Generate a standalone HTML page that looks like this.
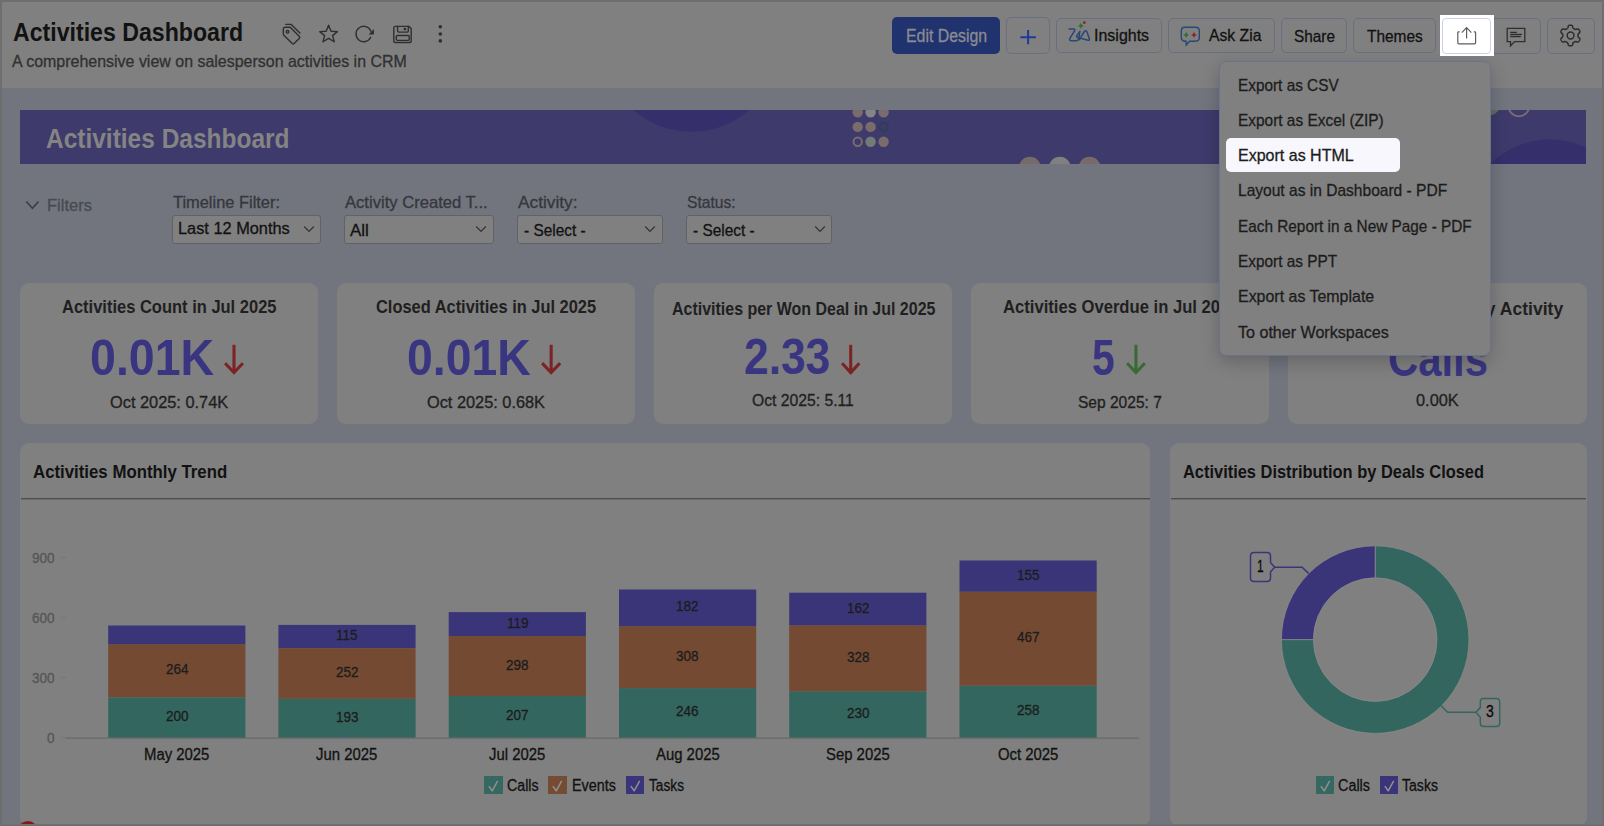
<!DOCTYPE html><html><head><meta charset="utf-8"><style>
html,body{margin:0;padding:0;width:1604px;height:826px;overflow:hidden;background:#808080;}
body{position:relative;font-family:"Liberation Sans",sans-serif;}
.t{position:absolute;white-space:nowrap;line-height:1;transform-origin:0 0;-webkit-text-stroke:0.3px currentColor;}
.r{position:absolute;}
</style></head><body>
<div class="r" style="left:0px;top:0px;width:1604px;height:88px;background:#808080;"></div>
<div class="r" style="left:0px;top:88px;width:1604px;height:738px;background:#72757e;"></div>
<div class="t" style="left:13.00px;top:19px;font-size:26.5px;color:#121212;font-weight:bold;-webkit-text-stroke:0;transform:scaleX(0.8729);">Activities Dashboard</div>
<div class="t" style="left:12.20px;top:53px;font-size:17.0px;color:#303030;transform:scaleX(0.9390);">A comprehensive view on salesperson activities in CRM</div>
<svg class="r" style="left:270px;top:15px;width:190px;height:40px" viewBox="270 15 190 40" fill="none" stroke="#2e2e2e" stroke-width="1.4" stroke-linejoin="round" stroke-linecap="round">
<path d="M283.3 29.3 Q283.3 27.3 285.3 27.3 L290.2 27.3 L299.4 36.5 Q300.3 37.4 299.4 38.3 L294.1 43.6 Q293.2 44.5 292.3 43.6 L284.1 35.4 Q283.3 34.6 283.3 33.5 Z"/>
<circle cx="287.5" cy="31.8" r="1.3"/>
<path d="M285.8 24.4 H291.3 L299.9 33"/>
<path d="M328.60 25.23 L331.04 31.24 L337.44 31.62 L332.55 35.66 L334.24 41.77 L328.60 38.29 L322.96 41.77 L324.65 35.66 L319.76 31.62 L326.16 31.24 Z"/>
<path d="M370.7 37.3 A7.7 7.7 0 1 1 370.9 31.2"/>
<path d="M373.9 29.1 L373.9 34.6 L368.6 34.6 Z" fill="#2e2e2e" stroke="none"/>
<path d="M395.3 26.4 H409 L411.2 28.6 V41.2 Q411.2 42.5 409.9 42.5 H395.1 Q393.8 42.5 393.8 41.2 V27.7 Q393.8 26.4 395.3 26.4 Z"/>
<path d="M397.6 26.4 V31 Q397.6 32.1 398.7 32.1 H407.2 Q408.3 32.1 408.3 31 V26.4"/>
<rect x="396.3" y="35.5" width="13" height="4.9" rx="1.1"/>
<circle cx="404.9" cy="29.1" r="0.7" fill="#2e2e2e"/>
</svg>
<svg class="r" style="left:435px;top:22px;width:12px;height:24px" viewBox="435 22 12 24"><circle cx="440.3" cy="26.8" r="1.8" fill="#2e2e2e"/><circle cx="440.3" cy="34" r="1.8" fill="#2e2e2e"/><circle cx="440.3" cy="40.9" r="1.8" fill="#2e2e2e"/></svg>
<div class="r" style="left:892px;top:17px;width:108px;height:37px;background:#20336f;border-radius:5px;"></div>
<div class="t" style="left:906.00px;top:28px;font-size:17.5px;color:#8a8c92;transform:scaleX(0.9074);">Edit Design</div>
<div class="r" style="left:1006px;top:17px;width:44px;height:37px;border:1px solid #6a6f80;box-sizing:border-box;border-radius:5px;"></div>
<svg class="r" style="left:1018px;top:28px;width:20px;height:18px" viewBox="1018 28 20 18"><path d="M1020.3 37.2 H1035.9 M1028.1 30 V44.2" stroke="#1d3a98" stroke-width="2"/></svg>
<div class="r" style="left:1056px;top:18px;width:106px;height:35px;border:1px solid #6a6f80;box-sizing:border-box;border-radius:5px;"></div>
<svg class="r" style="left:1066px;top:18px;width:26px;height:26px" viewBox="1066 18 26 26" fill="none">
<path d="M1069.2 28.9 H1073.6 Q1075.4 29.1 1074.5 30.9 L1069.9 38.3 Q1068.9 40.8 1071.6 40.8 H1076.4 Q1078.1 40.7 1078.6 38.9 L1079.8 31.6" stroke="#284676" stroke-width="1.5" stroke-linejoin="round" stroke-linecap="round"/>
<path d="M1079.8 31.8 L1076.8 35.6 Q1076.2 37.1 1077.9 37.5 L1088 40.2 Q1089.8 40.5 1089.3 38.6 L1087 32 Q1086 29.6 1084.4 31.5 L1079.2 39.8" stroke="#284676" stroke-width="1.5" stroke-linejoin="round" stroke-linecap="round"/>
<path d="M1080.9 22.6 Q1081.3 25.6 1084.3 26 Q1081.3 26.4 1080.9 29.4 Q1080.5 26.4 1077.5 26 Q1080.5 25.6 1080.9 22.6 Z" fill="#2f6e34"/>
<circle cx="1084.3" cy="22.7" r="1.4" fill="#8c2424"/>
</svg>
<div class="t" style="left:1093.70px;top:28px;font-size:16.75px;color:#121212;transform:scaleX(0.9545);">Insights</div>
<div class="r" style="left:1168px;top:18px;width:107px;height:35px;border:1px solid #6a6f80;box-sizing:border-box;border-radius:5px;"></div>
<svg class="r" style="left:1178px;top:24px;width:24px;height:24px" viewBox="1178 24 24 24" fill="none">
<path d="M1185 27.3 H1195.5 Q1199.3 27.3 1199.3 31 V37.6 Q1199.3 41.2 1195.5 41.2 H1189.5 L1186.3 45 L1186 41.2 Q1181.3 41 1181.3 37.4 V31 Q1181.3 27.3 1185 27.3 Z" stroke="#284676" stroke-width="1.4"/>
<path d="M1186.2 31.8 Q1186.6 34.5 1189.2 34.9 Q1186.6 35.3 1186.2 38 Q1185.8 35.3 1183.2 34.9 Q1185.8 34.5 1186.2 31.8 Z" fill="#2f6e34"/>
<path d="M1194 31.8 Q1194.4 34.5 1197 34.9 Q1194.4 35.3 1194 38 Q1193.6 35.3 1191 34.9 Q1193.6 34.5 1194 31.8 Z" fill="#8c2424"/>
</svg>
<div class="t" style="left:1208.90px;top:28px;font-size:16.75px;color:#121212;transform:scaleX(0.9383);">Ask Zia</div>
<div class="r" style="left:1281px;top:18px;width:66px;height:35px;border:1px solid #6a6f80;box-sizing:border-box;border-radius:5px;"></div>
<div class="t" style="left:1293.60px;top:28px;font-size:17.0px;color:#121212;transform:scaleX(0.9016);">Share</div>
<div class="r" style="left:1353px;top:18px;width:83px;height:35px;border:1px solid #6a6f80;box-sizing:border-box;border-radius:5px;"></div>
<div class="t" style="left:1367.10px;top:28px;font-size:17.0px;color:#121212;transform:scaleX(0.9087);">Themes</div>
<div class="r" style="left:1488px;top:18px;width:53px;height:36px;border:1px solid #6a6f80;box-sizing:border-box;border-radius:5px;"></div>
<svg class="r" style="left:1500px;top:22px;width:32px;height:28px" viewBox="1500 22 32 28" fill="none" stroke="#2e2e2e" stroke-width="1.3">
<path d="M1507.2 28.4 H1524.8 V41.6 H1514.6 L1510.5 45.8 V41.6 H1507.2 Z" stroke-linejoin="miter"/>
<path d="M1510.2 32.3 H1516.8 M1510.2 34.5 H1521.8 M1510.2 36.7 H1520.8"/>
</svg>
<div class="r" style="left:1547px;top:18px;width:48px;height:36px;border:1px solid #6a6f80;box-sizing:border-box;border-radius:5px;"></div>
<svg class="r" style="left:1555px;top:20px;width:32px;height:32px" viewBox="1555 20 32 32" fill="none" stroke="#2e2e2e" stroke-width="1.5" stroke-linejoin="round">
<path d="M1570.40 25.15 L1570.76 25.16 L1571.12 25.19 L1571.48 25.25 L1571.83 25.35 L1572.16 25.55 L1572.44 25.90 L1572.65 26.46 L1572.79 27.15 L1572.93 27.72 L1573.10 28.08 L1573.31 28.31 L1573.53 28.47 L1573.76 28.61 L1573.99 28.74 L1574.23 28.87 L1574.46 29.01 L1574.69 29.15 L1574.92 29.28 L1575.17 29.39 L1575.47 29.45 L1575.87 29.42 L1576.43 29.25 L1577.10 29.03 L1577.70 28.93 L1578.14 29.00 L1578.47 29.19 L1578.74 29.44 L1578.97 29.72 L1579.17 30.02 L1579.36 30.32 L1579.54 30.64 L1579.69 30.97 L1579.82 31.31 L1579.90 31.66 L1579.90 32.04 L1579.74 32.47 L1579.35 32.93 L1578.83 33.40 L1578.40 33.80 L1578.17 34.13 L1578.08 34.42 L1578.05 34.70 L1578.05 34.97 L1578.05 35.23 L1578.05 35.50 L1578.05 35.77 L1578.05 36.03 L1578.05 36.30 L1578.08 36.58 L1578.17 36.87 L1578.40 37.20 L1578.83 37.60 L1579.35 38.07 L1579.74 38.53 L1579.90 38.96 L1579.90 39.34 L1579.82 39.69 L1579.69 40.03 L1579.54 40.36 L1579.36 40.67 L1579.17 40.98 L1578.97 41.28 L1578.74 41.56 L1578.47 41.81 L1578.14 42.00 L1577.70 42.07 L1577.10 41.97 L1576.43 41.75 L1575.87 41.58 L1575.47 41.55 L1575.17 41.61 L1574.92 41.72 L1574.69 41.85 L1574.46 41.99 L1574.23 42.13 L1573.99 42.26 L1573.76 42.39 L1573.53 42.53 L1573.31 42.69 L1573.10 42.92 L1572.93 43.28 L1572.79 43.85 L1572.65 44.54 L1572.44 45.10 L1572.16 45.45 L1571.83 45.65 L1571.48 45.75 L1571.12 45.81 L1570.76 45.84 L1570.40 45.85 L1570.04 45.84 L1569.68 45.81 L1569.32 45.75 L1568.97 45.65 L1568.64 45.45 L1568.36 45.10 L1568.15 44.54 L1568.01 43.85 L1567.87 43.28 L1567.70 42.92 L1567.49 42.69 L1567.27 42.53 L1567.04 42.39 L1566.81 42.26 L1566.58 42.13 L1566.34 41.99 L1566.11 41.85 L1565.88 41.72 L1565.63 41.61 L1565.33 41.55 L1564.93 41.58 L1564.37 41.75 L1563.70 41.97 L1563.10 42.07 L1562.66 42.00 L1562.33 41.81 L1562.06 41.56 L1561.83 41.28 L1561.63 40.98 L1561.44 40.68 L1561.26 40.36 L1561.11 40.03 L1560.98 39.69 L1560.90 39.34 L1560.90 38.96 L1561.06 38.53 L1561.45 38.07 L1561.97 37.60 L1562.40 37.20 L1562.63 36.87 L1562.72 36.58 L1562.75 36.30 L1562.75 36.03 L1562.75 35.77 L1562.75 35.50 L1562.75 35.23 L1562.75 34.97 L1562.75 34.70 L1562.72 34.42 L1562.63 34.13 L1562.40 33.80 L1561.97 33.40 L1561.45 32.93 L1561.06 32.47 L1560.90 32.04 L1560.90 31.66 L1560.98 31.31 L1561.11 30.97 L1561.26 30.64 L1561.44 30.32 L1561.63 30.02 L1561.83 29.72 L1562.06 29.44 L1562.33 29.19 L1562.66 29.00 L1563.10 28.93 L1563.70 29.03 L1564.37 29.25 L1564.93 29.42 L1565.33 29.45 L1565.63 29.39 L1565.88 29.28 L1566.11 29.15 L1566.34 29.01 L1566.58 28.87 L1566.81 28.74 L1567.04 28.61 L1567.27 28.47 L1567.49 28.31 L1567.70 28.08 L1567.87 27.72 L1568.01 27.15 L1568.15 26.46 L1568.36 25.90 L1568.64 25.55 L1568.97 25.35 L1569.32 25.25 L1569.68 25.19 L1570.04 25.16 L1570.40 25.15 Z"/>
<circle cx="1570.6" cy="35.5" r="3.4"/>
</svg>
<svg class="r" style="left:20px;top:110px;width:1566px;height:54px" viewBox="20 110 1566 54">
<rect x="20" y="110" width="1566" height="54" fill="#3e3a6c"/>
<circle cx="691.4" cy="44.3" r="87.5" fill="#352f6b"/>
<circle cx="857.7" cy="112.3" r="5.2" fill="#7a6c6c"/><circle cx="870.6" cy="112.3" r="5.2" fill="#858585"/><circle cx="883.6" cy="112.3" r="5.2" fill="#7a6c6c"/>
<circle cx="857.7" cy="126.9" r="5.2" fill="#7a6c6c"/><circle cx="870.6" cy="126.9" r="5.2" fill="#7a6c6c"/><circle cx="883.6" cy="126.9" r="4.1" fill="none" stroke="#2e3e55" stroke-width="2"/>
<circle cx="857.7" cy="141.8" r="4.2" fill="none" stroke="#7a6c6c" stroke-width="2"/><circle cx="870.6" cy="141.8" r="5.2" fill="#727b78"/><circle cx="883.6" cy="141.8" r="5.2" fill="#7a6c6c"/>
<circle cx="1029.9" cy="167.8" r="11" fill="#766a6a"/><circle cx="1059.8" cy="167.8" r="11" fill="#808080"/><circle cx="1089.6" cy="167.8" r="11" fill="#766a6a"/>
<circle cx="1550" cy="225.6" r="86" fill="#352f6b"/>
<circle cx="1518.9" cy="105.7" r="10.5" fill="none" stroke="#7a6c6c" stroke-width="2"/>
<circle cx="1487" cy="101" r="15" fill="#5d6e60"/>
</svg>
<div class="t" style="left:46.00px;top:124px;font-size:28.5px;color:#848484;font-weight:bold;-webkit-text-stroke:0;transform:scaleX(0.8589);">Activities Dashboard</div>
<svg class="r" style="left:22px;top:196px;width:20px;height:16px" viewBox="22 196 20 16"><path d="M26.3 201.5 L32.4 208.2 L38.5 201.5" fill="none" stroke="#3a3d45" stroke-width="1.6"/></svg>
<div class="t" style="left:47.40px;top:197px;font-size:17.0px;color:#474a52;transform:scaleX(0.9703);">Filters</div>
<div class="t" style="left:172.50px;top:194px;font-size:17.0px;color:#35373d;transform:scaleX(0.9654);">Timeline Filter:</div>
<div class="r" style="left:172px;top:215px;width:149px;height:28.5px;background:#808080;border:1px solid #606268;box-sizing:border-box;border-radius:3px;"></div>
<svg class="r" style="left:301.8px;top:222px;width:14px;height:14px" viewBox="301.8 222 14 14"><path d="M304.0 226.5 L308.8 231.5 L313.6 226.5" fill="none" stroke="#333" stroke-width="1.2"/></svg>
<div class="t" style="left:344.50px;top:194px;font-size:17.0px;color:#35373d;transform:scaleX(0.9765);">Activity Created T...</div>
<div class="r" style="left:344px;top:215px;width:150px;height:28.5px;background:#808080;border:1px solid #606268;box-sizing:border-box;border-radius:3px;"></div>
<svg class="r" style="left:473.7px;top:222px;width:14px;height:14px" viewBox="473.7 222 14 14"><path d="M475.9 226.5 L480.7 231.5 L485.5 226.5" fill="none" stroke="#333" stroke-width="1.2"/></svg>
<div class="t" style="left:517.50px;top:194px;font-size:17.0px;color:#35373d;transform:scaleX(1.0160);">Activity:</div>
<div class="r" style="left:517px;top:215px;width:146px;height:28.5px;background:#808080;border:1px solid #606268;box-sizing:border-box;border-radius:3px;"></div>
<svg class="r" style="left:643.3px;top:222px;width:14px;height:14px" viewBox="643.3 222 14 14"><path d="M645.5 226.5 L650.3 231.5 L655.0999999999999 226.5" fill="none" stroke="#333" stroke-width="1.2"/></svg>
<div class="t" style="left:686.50px;top:194px;font-size:17.0px;color:#35373d;transform:scaleX(0.9203);">Status:</div>
<div class="r" style="left:686px;top:215px;width:146px;height:28.5px;background:#808080;border:1px solid #606268;box-sizing:border-box;border-radius:3px;"></div>
<svg class="r" style="left:812.5px;top:222px;width:14px;height:14px" viewBox="812.5 222 14 14"><path d="M814.7 226.5 L819.5 231.5 L824.3 226.5" fill="none" stroke="#333" stroke-width="1.2"/></svg>
<div class="t" style="left:178.30px;top:220px;font-size:17.0px;color:#121212;transform:scaleX(0.9610);">Last 12 Months</div>
<div class="t" style="left:350.00px;top:222px;font-size:17.0px;color:#121212;">All</div>
<div class="t" style="left:523.80px;top:222px;font-size:17.0px;color:#121212;transform:scaleX(0.9057);">- Select -</div>
<div class="t" style="left:693.00px;top:222px;font-size:17.0px;color:#121212;transform:scaleX(0.9057);">- Select -</div>
<div class="r" style="left:20px;top:283px;width:298px;height:141px;background:#808080;border-radius:9px;"></div>
<div class="t" style="left:61.50px;top:298px;font-size:18.25px;color:#1f1f1f;font-weight:bold;-webkit-text-stroke:0;transform:scaleX(0.9038);">Activities Count in Jul 2025</div>
<div class="t" style="left:90.40px;top:333px;font-size:50.25px;color:#393580;font-weight:bold;-webkit-text-stroke:0;transform:scaleX(0.9262);">0.01K</div>
<svg class="r" style="left:222px;top:342px;width:24px;height:36px" viewBox="222 342 24 36" fill="none" stroke="#7c2323" stroke-width="3.1" stroke-linecap="butt" stroke-linejoin="miter"><path d="M234.0 344.8 V372"/><path d="M225.1 363.2 L234.0 372.6 L242.9 363.2"/></svg>
<div class="t" style="left:109.80px;top:395px;font-size:16.0px;color:#1f1f1f;transform:scaleX(1.0222);">Oct 2025: 0.74K</div>
<div class="r" style="left:337px;top:283px;width:298px;height:141px;background:#808080;border-radius:9px;"></div>
<div class="t" style="left:375.90px;top:298px;font-size:18.25px;color:#1f1f1f;font-weight:bold;-webkit-text-stroke:0;transform:scaleX(0.8992);">Closed Activities in Jul 2025</div>
<div class="t" style="left:407.40px;top:333px;font-size:50.25px;color:#393580;font-weight:bold;-webkit-text-stroke:0;transform:scaleX(0.9233);">0.01K</div>
<svg class="r" style="left:539.2px;top:342px;width:24.299999999999955px;height:36px" viewBox="539.2 342 24.299999999999955 36" fill="none" stroke="#7c2323" stroke-width="3.1" stroke-linecap="butt" stroke-linejoin="miter"><path d="M551.35 344.8 V372"/><path d="M542.3000000000001 363.2 L551.35 372.6 L560.4 363.2"/></svg>
<div class="t" style="left:427.20px;top:395px;font-size:16.0px;color:#1f1f1f;transform:scaleX(1.0205);">Oct 2025: 0.68K</div>
<div class="r" style="left:654px;top:283px;width:298px;height:141px;background:#808080;border-radius:9px;"></div>
<div class="t" style="left:671.60px;top:300px;font-size:18.25px;color:#1f1f1f;font-weight:bold;-webkit-text-stroke:0;transform:scaleX(0.8754);">Activities per Won Deal in Jul 2025</div>
<div class="t" style="left:744.40px;top:332px;font-size:50.25px;color:#393580;font-weight:bold;-webkit-text-stroke:0;transform:scaleX(0.8814);">2.33</div>
<svg class="r" style="left:838.6px;top:342px;width:23.399999999999977px;height:36px" viewBox="838.6 342 23.399999999999977 36" fill="none" stroke="#7c2323" stroke-width="3.1" stroke-linecap="butt" stroke-linejoin="miter"><path d="M850.3 344.8 V372"/><path d="M841.7 363.2 L850.3 372.6 L858.9 363.2"/></svg>
<div class="t" style="left:752.20px;top:393px;font-size:16.0px;color:#1f1f1f;transform:scaleX(0.9810);">Oct 2025: 5.11</div>
<div class="r" style="left:971px;top:283px;width:298px;height:141px;background:#808080;border-radius:9px;"></div>
<div class="t" style="left:1002.50px;top:298px;font-size:18.25px;color:#1f1f1f;font-weight:bold;-webkit-text-stroke:0;transform:scaleX(0.9105);">Activities Overdue in Jul 2025</div>
<div class="t" style="left:1091.70px;top:333px;font-size:50.25px;color:#393580;font-weight:bold;-webkit-text-stroke:0;transform:scaleX(0.8087);">5</div>
<svg class="r" style="left:1124.3px;top:342px;width:23.90000000000009px;height:36px" viewBox="1124.3 342 23.90000000000009 36" fill="none" stroke="#386b33" stroke-width="3.1" stroke-linecap="butt" stroke-linejoin="miter"><path d="M1136.25 344.8 V372"/><path d="M1127.3999999999999 363.2 L1136.25 372.6 L1145.1000000000001 363.2"/></svg>
<div class="t" style="left:1078.40px;top:395px;font-size:16.0px;color:#1f1f1f;transform:scaleX(0.9711);">Sep 2025: 7</div>
<div class="r" style="left:1288px;top:283px;width:299px;height:141px;background:#808080;border-radius:9px;"></div>
<div class="t" style="left:1474.50px;top:300px;font-size:18.25px;color:#1f1f1f;font-weight:bold;-webkit-text-stroke:0;transform:scaleX(0.9627);">by Activity</div>
<div class="t" style="left:1387.70px;top:334px;font-size:50.25px;color:#393580;font-weight:bold;-webkit-text-stroke:0;transform:scaleX(0.8326);">Calls</div>
<div class="t" style="left:1415.80px;top:393px;font-size:16.0px;color:#1f1f1f;transform:scaleX(1.0212);">0.00K</div>
<div class="r" style="left:20px;top:443px;width:1130px;height:383px;background:#808080;border-radius:9px;"></div>
<div class="r" style="left:1170px;top:443px;width:417px;height:383px;background:#808080;border-radius:9px;"></div>
<div class="t" style="left:33.20px;top:463px;font-size:18.5px;color:#121212;font-weight:bold;-webkit-text-stroke:0;transform:scaleX(0.9083);">Activities Monthly Trend</div>
<div class="r" style="left:21px;top:498px;width:1129px;height:1px;background:#4e4e4e;"></div>
<div class="r" style="left:21px;top:499px;width:1129px;height:1px;background:#6c6c6c;"></div>
<div class="t" style="left:1183.00px;top:463px;font-size:18.5px;color:#121212;font-weight:bold;-webkit-text-stroke:0;transform:scaleX(0.8873);">Activities Distribution by Deals Closed</div>
<div class="r" style="left:1171px;top:498px;width:415px;height:1px;background:#4e4e4e;"></div>
<div class="r" style="left:1171px;top:499px;width:415px;height:1px;background:#6c6c6c;"></div>
<svg class="r" style="left:20px;top:500px;width:1130px;height:300px" viewBox="20 500 1130 300"><line x1="61" y1="557.5" x2="66" y2="557.5" stroke="#767676" stroke-width="1"/><line x1="61" y1="617.5" x2="66" y2="617.5" stroke="#767676" stroke-width="1"/><line x1="61" y1="677.5" x2="66" y2="677.5" stroke="#767676" stroke-width="1"/><line x1="61" y1="737.5" x2="66" y2="737.5" stroke="#767676" stroke-width="1"/><line x1="65.5" y1="738.2" x2="1139" y2="738.2" stroke="#686868" stroke-width="1.2"/><rect x="108.2" y="697.4" width="137.2" height="40.2" fill="#33665f"/><rect x="108.2" y="644.2" width="137.2" height="53.1" fill="#744a33"/><rect x="108.2" y="625.5" width="137.2" height="18.7" fill="#3a3579"/><rect x="278.4" y="698.8" width="137.2" height="38.8" fill="#33665f"/><rect x="278.4" y="648.1" width="137.2" height="50.7" fill="#744a33"/><rect x="278.4" y="624.9" width="137.2" height="23.1" fill="#3a3579"/><rect x="448.7" y="696.0" width="137.2" height="41.6" fill="#33665f"/><rect x="448.7" y="636.0" width="137.2" height="60.0" fill="#744a33"/><rect x="448.7" y="612.1" width="137.2" height="23.9" fill="#3a3579"/><rect x="619.0" y="688.1" width="137.2" height="49.5" fill="#33665f"/><rect x="619.0" y="626.1" width="137.2" height="62.0" fill="#744a33"/><rect x="619.0" y="589.5" width="137.2" height="36.6" fill="#3a3579"/><rect x="789.2" y="691.3" width="137.2" height="46.3" fill="#33665f"/><rect x="789.2" y="625.3" width="137.2" height="66.0" fill="#744a33"/><rect x="789.2" y="592.7" width="137.2" height="32.6" fill="#3a3579"/><rect x="959.5" y="685.7" width="137.2" height="51.9" fill="#33665f"/><rect x="959.5" y="591.7" width="137.2" height="94.0" fill="#744a33"/><rect x="959.5" y="560.5" width="137.2" height="31.2" fill="#3a3579"/></svg>
<div class="t" style="left:165.54px;top:708px;font-size:15.0px;color:#1c1c1c;transform:scaleX(0.9000);">200</div>
<div class="t" style="left:165.54px;top:661px;font-size:15.0px;color:#1c1c1c;transform:scaleX(0.9000);">264</div>
<div class="t" style="left:144.13px;top:747px;font-size:16.0px;color:#121212;transform:scaleX(0.9300);">May 2025</div>
<div class="t" style="left:335.79px;top:709px;font-size:15.0px;color:#1c1c1c;transform:scaleX(0.9000);">193</div>
<div class="t" style="left:335.79px;top:664px;font-size:15.0px;color:#1c1c1c;transform:scaleX(0.9000);">252</div>
<div class="t" style="left:336.29px;top:627px;font-size:15.0px;color:#1c1c1c;transform:scaleX(0.9000);">115</div>
<div class="t" style="left:316.44px;top:747px;font-size:16.0px;color:#121212;transform:scaleX(0.9300);">Jun 2025</div>
<div class="t" style="left:506.04px;top:707px;font-size:15.0px;color:#1c1c1c;transform:scaleX(0.9000);">207</div>
<div class="t" style="left:506.04px;top:657px;font-size:15.0px;color:#1c1c1c;transform:scaleX(0.9000);">298</div>
<div class="t" style="left:506.54px;top:615px;font-size:15.0px;color:#1c1c1c;transform:scaleX(0.9000);">119</div>
<div class="t" style="left:489.17px;top:747px;font-size:16.0px;color:#121212;transform:scaleX(0.9300);">Jul 2025</div>
<div class="t" style="left:676.29px;top:703px;font-size:15.0px;color:#1c1c1c;transform:scaleX(0.9000);">246</div>
<div class="t" style="left:676.29px;top:648px;font-size:15.0px;color:#1c1c1c;transform:scaleX(0.9000);">308</div>
<div class="t" style="left:676.29px;top:598px;font-size:15.0px;color:#1c1c1c;transform:scaleX(0.9000);">182</div>
<div class="t" style="left:655.69px;top:747px;font-size:16.0px;color:#121212;transform:scaleX(0.9300);">Aug 2025</div>
<div class="t" style="left:846.54px;top:705px;font-size:15.0px;color:#1c1c1c;transform:scaleX(0.9000);">230</div>
<div class="t" style="left:846.54px;top:649px;font-size:15.0px;color:#1c1c1c;transform:scaleX(0.9000);">328</div>
<div class="t" style="left:846.54px;top:600px;font-size:15.0px;color:#1c1c1c;transform:scaleX(0.9000);">162</div>
<div class="t" style="left:825.94px;top:747px;font-size:16.0px;color:#121212;transform:scaleX(0.9300);">Sep 2025</div>
<div class="t" style="left:1016.79px;top:702px;font-size:15.0px;color:#1c1c1c;transform:scaleX(0.9000);">258</div>
<div class="t" style="left:1016.79px;top:629px;font-size:15.0px;color:#1c1c1c;transform:scaleX(0.9000);">467</div>
<div class="t" style="left:1016.79px;top:567px;font-size:15.0px;color:#1c1c1c;transform:scaleX(0.9000);">155</div>
<div class="t" style="left:997.86px;top:747px;font-size:16.0px;color:#121212;transform:scaleX(0.9300);">Oct 2025</div>
<div class="t" style="left:31.98px;top:550px;font-size:15.25px;color:#555555;transform:scaleX(0.8852);">900</div>
<div class="t" style="left:31.98px;top:610px;font-size:15.25px;color:#555555;transform:scaleX(0.8852);">600</div>
<div class="t" style="left:31.98px;top:670px;font-size:15.25px;color:#555555;transform:scaleX(0.8852);">300</div>
<div class="t" style="left:46.99px;top:730px;font-size:15.25px;color:#555555;transform:scaleX(0.8852);">0</div>
<div class="r" style="left:484.3px;top:776px;width:18.5px;height:18.200000000000045px;background:#356860;"></div>
<svg class="r" style="left:484.3px;top:776px;width:19px;height:19px" viewBox="0 0 19 19"><path d="M5.2 10.6 L8.2 14.8 L13.4 5.4" fill="none" stroke="#8e9090" stroke-width="1.5" stroke-linejoin="round" stroke-linecap="round"/></svg>
<div class="t" style="left:507.20px;top:778px;font-size:16.0px;color:#121212;transform:scaleX(0.8886);">Calls</div>
<div class="r" style="left:548.4px;top:776px;width:18.5px;height:18.200000000000045px;background:#764b34;"></div>
<svg class="r" style="left:548.4px;top:776px;width:19px;height:19px" viewBox="0 0 19 19"><path d="M5.2 10.6 L8.2 14.8 L13.4 5.4" fill="none" stroke="#8e9090" stroke-width="1.5" stroke-linejoin="round" stroke-linecap="round"/></svg>
<div class="t" style="left:571.70px;top:778px;font-size:16.0px;color:#121212;transform:scaleX(0.8975);">Events</div>
<div class="r" style="left:625.9px;top:776px;width:18.5px;height:18.200000000000045px;background:#3a357b;"></div>
<svg class="r" style="left:625.9px;top:776px;width:19px;height:19px" viewBox="0 0 19 19"><path d="M5.2 10.6 L8.2 14.8 L13.4 5.4" fill="none" stroke="#8e9090" stroke-width="1.5" stroke-linejoin="round" stroke-linecap="round"/></svg>
<div class="t" style="left:648.50px;top:778px;font-size:16.0px;color:#121212;transform:scaleX(0.8558);">Tasks</div>
<div class="r" style="left:1315.5px;top:776px;width:18.5px;height:18.200000000000045px;background:#356860;"></div>
<svg class="r" style="left:1315.5px;top:776px;width:19px;height:19px" viewBox="0 0 19 19"><path d="M5.2 10.6 L8.2 14.8 L13.4 5.4" fill="none" stroke="#8e9090" stroke-width="1.5" stroke-linejoin="round" stroke-linecap="round"/></svg>
<div class="t" style="left:1338.00px;top:778px;font-size:16.0px;color:#121212;transform:scaleX(0.8998);">Calls</div>
<div class="r" style="left:1379.7px;top:776px;width:18.5px;height:18.200000000000045px;background:#3a357b;"></div>
<svg class="r" style="left:1379.7px;top:776px;width:19px;height:19px" viewBox="0 0 19 19"><path d="M5.2 10.6 L8.2 14.8 L13.4 5.4" fill="none" stroke="#8e9090" stroke-width="1.5" stroke-linejoin="round" stroke-linecap="round"/></svg>
<div class="t" style="left:1402.00px;top:778px;font-size:16.0px;color:#121212;transform:scaleX(0.8802);">Tasks</div>
<svg class="r" style="left:1170px;top:500px;width:417px;height:260px" viewBox="1170 500 417 260">
<path d="M1375.20 545.80 A93.8 93.8 0 1 1 1281.40 639.60 L1313.40 639.60 A61.8 61.8 0 1 0 1375.20 577.80 Z" fill="#33665f" stroke="#8a8a8a" stroke-width="0.8"/>
<path d="M1281.40 639.60 A93.8 93.8 0 0 1 1375.20 545.80 L1375.20 577.80 A61.8 61.8 0 0 0 1313.40 639.60 Z" fill="#3a3579" stroke="#8a8a8a" stroke-width="0.8"/>
<path d="M1270.5 556 Q1270.5 552.5 1267 552.5 H1254 Q1250.5 552.5 1250.5 556 V578 Q1250.5 581.5 1254 581.5 H1267 Q1270.5 581.5 1270.5 578 V571.8 L1274.7 567.2 L1270.5 562.4 Z" fill="none" stroke="#3a3579" stroke-width="1.5"/>
<path d="M1274.7 567.2 H1302.1 L1308.6 573.4" fill="none" stroke="#3a3579" stroke-width="1.5"/>
<path d="M1480.3 702 Q1480.3 698.5 1483.8 698.5 H1496.2 Q1499.7 698.5 1499.7 702 V723 Q1499.7 726.5 1496.2 726.5 H1483.8 Q1480.3 726.5 1480.3 723 V717.2 L1475.9 712.3 L1480.3 707.6 Z" fill="none" stroke="#33665f" stroke-width="1.5"/>
<path d="M1475.9 712.3 H1447.6 L1441.1 705.8" fill="none" stroke="#33665f" stroke-width="1.5"/>
</svg>
<div class="t" style="left:1257.40px;top:559px;font-size:16.0px;color:#0a0a0a;transform:scaleX(0.7417);">1</div>
<div class="t" style="left:1486.20px;top:704px;font-size:16.0px;color:#0a0a0a;transform:scaleX(0.8766);">3</div>
<svg class="r" style="left:16px;top:815px;width:24px;height:11px" viewBox="16 815 24 11"><circle cx="27.8" cy="831.2" r="10.2" fill="#861a12"/></svg>
<div class="r" style="left:1219px;top:61px;width:272px;height:295px;background:#808080;border:1px solid #6b7290;box-sizing:border-box;border-radius:7px;z-index:50;box-shadow:0 6px 18px rgba(0,0,0,0.22);"></div>
<div class="r" style="left:1226px;top:138px;width:174px;height:34px;background:#f7f7fd;border-radius:5px;z-index:51;"></div>
<div class="t" style="left:1238.30px;top:77px;font-size:17.0px;color:#1c1c1c;transform:scaleX(0.9032);z-index:52;">Export as CSV</div>
<div class="t" style="left:1238.30px;top:112px;font-size:17.0px;color:#1c1c1c;transform:scaleX(0.9072);z-index:52;">Export as Excel (ZIP)</div>
<div class="t" style="left:1238.30px;top:147px;font-size:17.0px;color:#1c1c1c;transform:scaleX(0.9421);z-index:52;">Export as HTML</div>
<div class="t" style="left:1238.30px;top:182px;font-size:17.0px;color:#1c1c1c;transform:scaleX(0.9148);z-index:52;">Layout as in Dashboard - PDF</div>
<div class="t" style="left:1238.30px;top:218px;font-size:17.0px;color:#1c1c1c;transform:scaleX(0.9027);z-index:52;">Each Report in a New Page - PDF</div>
<div class="t" style="left:1238.30px;top:253px;font-size:17.0px;color:#1c1c1c;transform:scaleX(0.9051);z-index:52;">Export as PPT</div>
<div class="t" style="left:1238.30px;top:288px;font-size:17.0px;color:#1c1c1c;transform:scaleX(0.9380);z-index:52;">Export as Template</div>
<div class="t" style="left:1238.30px;top:324px;font-size:17.0px;color:#1c1c1c;transform:scaleX(0.9456);z-index:52;">To other Workspaces</div>
<div class="r" style="left:1440px;top:15px;width:54px;height:41px;background:#ffffff;z-index:60;"></div>
<div class="r" style="left:1442px;top:18px;width:49px;height:36px;border:1px solid #cbd2ec;box-sizing:border-box;border-radius:4px;z-index:61;"></div>
<svg class="r" style="left:1450px;top:22px;width:34px;height:28px;z-index:62" viewBox="1450 22 34 28" fill="none" stroke="#5e5e5e" stroke-width="1.2">
<path d="M1459.6 31.8 H1458.6 Q1457.8 31.8 1457.8 32.6 V42.8 Q1457.8 43.8 1458.8 43.8 H1474.6 Q1475.6 43.8 1475.6 42.8 V32.6 Q1475.6 31.8 1474.8 31.8 H1473.8"/>
<path d="M1466.6 27.8 V38.6 M1461.8 32.6 L1466.6 27.6 L1471.4 32.6"/>
</svg>
<div class="r" style="left:0px;top:0px;width:1604px;height:826px;border:2px solid #6e6e6e;box-sizing:border-box;z-index:100;background:transparent;"></div>
</body></html>
